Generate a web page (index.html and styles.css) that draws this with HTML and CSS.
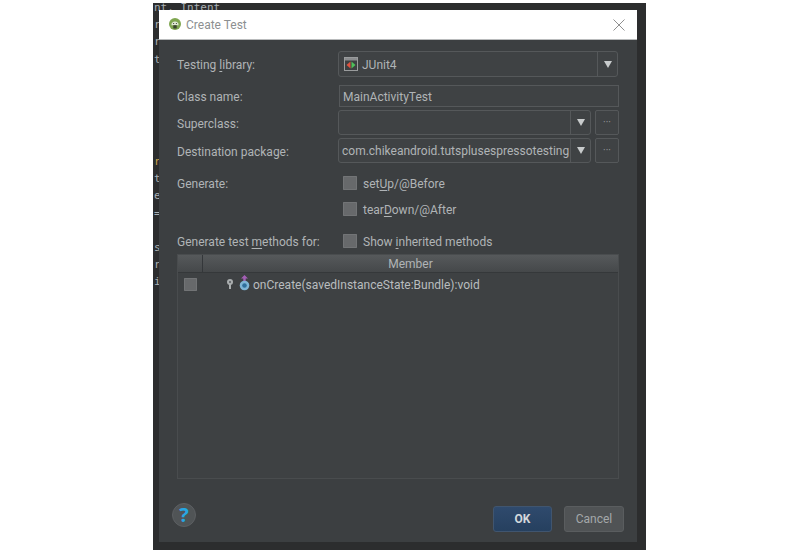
FILE: index.html
```html
<!DOCTYPE html>
<html lang="en">
<head>
<meta charset="utf-8">
<title>Create Test</title>
<link rel="stylesheet" href="styles.css">
</head>
<body>
<div class="window">
  <pre class="code"><span>nt. Intent</span>
<span>r</span>
<span>r</span>
<span>t</span></pre>
  <pre class="code code-lower"><span class="amber">r</span>
<span>t</span>
<span>e</span>
<span>=</span>

<span>s</span>
<span>r</span>
<span>i</span></pre>
  <div class="dialog">
    <header class="titlebar">
      <svg class="logo" viewBox="0 0 12 12" width="12" height="12"><circle cx="6" cy="6" r="6" fill="#7fa650"/><path d="M2.400 7.200a3.600 3.600 0 0 1 7.200 0z" fill="#dfe8d4"/><path d="M4.300 7.200h3.400v3.300H4.300z" fill="#39452f"/><circle cx="4.600" cy="5.500" r=".6" fill="#39452f"/><circle cx="7.400" cy="5.500" r=".6" fill="#39452f"/></svg>
      <span class="title">Create Test</span>
      <svg class="close" viewBox="0 0 12 12" width="12" height="12"><path d="M.5.5l11 11M11.500.5l-11 11" stroke="#8f8f8f" stroke-width="1" fill="none"/></svg>
    </header>
    <div class="content">
      <div class="form">
        <div class="row row-lib">
          <label class="label">Testing <u>l</u>ibrary:</label>
          <div class="combo combo-wide">
            <span class="combo-value">
              <svg class="junit" viewBox="0 0 14 14" width="14" height="14"><rect x=".5" y=".5" width="13" height="13" fill="#3c3f41" stroke="#9a9c9d"/><path d="M1 1h12v2.500H1z" fill="#8a8c8e"/><path d="M6.500 4.500v7L2.500 8z" fill="#e0523f"/><path d="M7.500 4.500v7l4-3.500z" fill="#4fc05a"/></svg>
              <span class="nudge">JUnit4</span>
            </span>
            <span class="arrow"><i></i></span>
          </div>
        </div>
        <div class="row row-class">
          <label class="label">Class name:</label>
          <div class="input">MainActivityTest</div>
        </div>
        <div class="row row-super">
          <label class="label">Superclass:</label>
          <div class="combo-group">
            <div class="combo"><span class="combo-value"></span><span class="arrow"><i></i></span></div>
            <div class="more">···</div>
          </div>
        </div>
        <div class="row row-dest">
          <label class="label">Destination package:</label>
          <div class="combo-group">
            <div class="combo"><span class="combo-value package">com.chikeandroid.tutsplusespressotesting</span><span class="arrow"><i></i></span></div>
            <div class="more">···</div>
          </div>
        </div>
        <div class="row row-gen">
          <label class="label">Generate:</label>
          <div class="check"><span class="box"></span><span class="nudge">set<u>U</u>p/@Before</span></div>
        </div>
        <div class="row row-tear">
          <span class="label"></span>
          <div class="check"><span class="box"></span><span class="nudge">tear<u>D</u>own/@After</span></div>
        </div>
        <div class="row row-methods">
          <label class="label">Generate test <u>m</u>ethods for:</label>
          <div class="check"><span class="box"></span><span class="nudge">Show <u>i</u>nherited methods</span></div>
        </div>
      </div>
      <div class="table">
        <div class="thead">
          <span class="th-check"></span>
          <span class="th-member">Member</span>
        </div>
        <div class="tr">
          <span class="box"></span>
          <svg class="key" viewBox="0 0 8 11" width="8" height="11"><circle cx="4" cy="3" r="3" fill="#a9adae"/><circle cx="4" cy="3" r="1" fill="#55595b"/><path d="M3 5h2v5H3z" fill="#a9adae"/></svg>
          <svg class="method" viewBox="0 0 11 16" width="11" height="16"><path d="M5.500 0L9 3.500H6.700V6H4.300V3.500H2z" fill="#a45fb5"/><circle cx="5.500" cy="10.500" r="4.800" fill="#7fb5d6"/><circle cx="5.500" cy="10.500" r="2.300" fill="#2f6f9c"/></svg>
          <span class="signature">onCreate(savedInstanceState:Bundle):void</span>
        </div>
      </div>
      <footer class="actions">
        <span class="help">?</span>
        <button class="btn btn-ok">OK</button>
        <button class="btn btn-cancel">Cancel</button>
      </footer>
    </div>
  </div>
</div>
</body>
</html>
```

FILE: styles.css
```css
* { box-sizing: border-box; }
html, body { margin: 0; padding: 0; background: #fff; }
body { width: 800px; height: 550px; overflow: hidden; font-family: Roboto, "Open Sans", sans-serif; font-size: 12px; color: #b0b4b6; }
u { text-underline-offset: 2px; }

.window { position: relative; width: 493px; height: 547px; margin: 3px 0 0 153px; padding: 7px 9px 6px 6px; background: #2c2d2e; overflow: hidden; }
.code { position: absolute; left: 1px; top: -4px; margin: 0; font: 11px/17.200px "DejaVu Sans Mono", monospace; color: #a9b0b3; }
.code-lower { top: 150px; }
.amber { color: #c9a24a; }

.dialog { position: relative; height: 532px; background: #3c3f41; display: flex; flex-direction: column; }
.titlebar { flex: none; height: 30px; background: #fff; display: flex; align-items: center; padding: 0 12px 0 10px; border-bottom: 1px solid #b9bbbc; }
.logo { flex: none; margin-top: -2px; }
.title { margin-left: 5px; flex: 1; color: #8c8f91; font-size: 12px; }
.close { flex: none; }

.content { flex: 1; display: flex; flex-direction: column; padding: 11px 13px 10px 18px; }
.form { display: flex; flex-direction: column; }
.row { display: flex; align-items: center; }
.label { flex: none; width: 161px; padding-top: 2px; }
.nudge { padding-top: 2px; }
.row-lib { height: 26px; margin-bottom: 8px; }
.row-class { height: 22px; margin-bottom: 3px; }
.row-super { height: 25px; margin-bottom: 3px; }
.row-dest { height: 25px; margin-bottom: 13px; }
.row-gen { height: 14px; margin-bottom: 12px; }
.row-tear { height: 14px; margin-bottom: 18px; }
.row-methods { height: 14px; margin-bottom: 6px; }

.combo { display: flex; flex: 1; min-width: 0; height: 100%; border: 1px solid #55585a; border-radius: 3px; background: #3f4244; }
.combo-wide { flex: none; width: 280px; }
.combo-value { flex: 1; min-width: 0; display: flex; align-items: center; gap: 4px; padding-left: 5px; white-space: nowrap; overflow: hidden; }
.package { padding-left: 3px; }
.junit { flex: none; }
.arrow { flex: none; width: 20px; border-left: 1px solid #55585a; display: flex; align-items: center; justify-content: center; }
.arrow i { width: 0; height: 0; border-left: 4.500px solid transparent; border-right: 4.500px solid transparent; border-top: 7px solid #c8cbcc; }

.input { width: 280px; height: 100%; margin-left: 1px; padding-left: 3px; border: 1px solid #55585a; background: #3f4244; line-height: 22px; }
.combo-group { display: flex; gap: 4px; width: 281px; height: 100%; }
.more { flex: none; width: 24px; border: 1px solid #55585a; border-radius: 2px; background: #3f4244; display: flex; align-items: center; justify-content: center; font-size: 10px; color: #9a9d9f; }

.check { display: flex; align-items: center; gap: 6px; margin-left: 5px; white-space: nowrap; }
.box { flex: none; width: 14px; height: 14px; border-radius: 1px; background: #67696b; box-shadow: inset 0 0 0 1px #727476; }

.table { height: 225px; width: 442px; display: flex; flex-direction: column; border: 1px solid #494c4e; background: #3e4143; }
.thead { flex: none; height: 18px; display: flex; background: linear-gradient(#56595b, #45484a); border-bottom: 1px solid #35383a; }
.th-check { flex: none; width: 25px; border-right: 1px solid #34373a; }
.th-member { flex: 1; text-align: center; line-height: 18px; }
.tr { display: flex; align-items: center; height: 23px; padding-left: 6px; color: #b9bdbf; }
.tr .box { width: 13px; height: 13px; }
.key { flex: none; margin-left: 29px; }
.method { flex: none; margin-left: 5px; margin-top: -3px; }
.signature { margin-left: 3px; }

.actions { flex: 1; display: flex; align-items: flex-end; }
.help { width: 24px; height: 24px; margin: 0 auto 5px -5px; border-radius: 50%; background: #505456; border: 1px solid #5c5f62; color: #27a7e3; font: 700 20px/22px "Open Sans", sans-serif; text-align: center; }
.btn { height: 26px; padding: 0; border-radius: 3px; font: 12px Roboto, sans-serif; }
.btn-ok { width: 59px; margin-right: 12px; background: linear-gradient(#2f4a6d, #26405f); border: 1px solid #40556f; color: #d3d8dc; font-weight: 700; }
.btn-cancel { width: 60px; background: #505355; border: 1px solid #5a5d5f; color: #a4a8aa; }
```
